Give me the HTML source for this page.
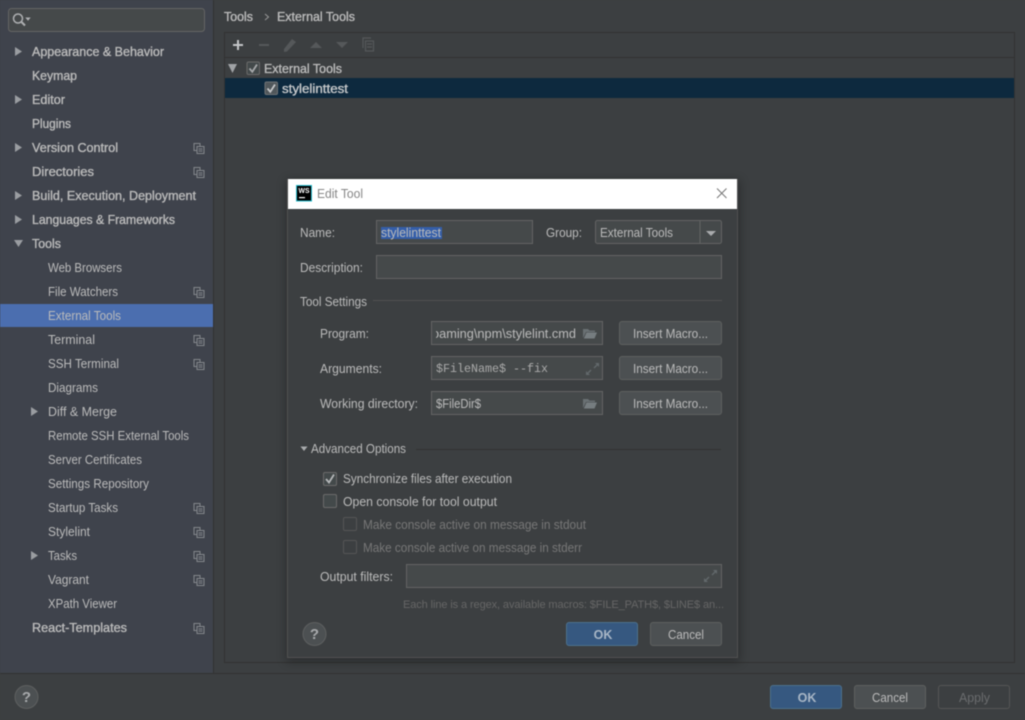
<!DOCTYPE html>
<html><head><meta charset="utf-8"><style>
html,body{margin:0;padding:0;background:#3c3f41;overflow:hidden}
svg{display:block;filter:blur(.4px)}
text{font-family:"Liberation Sans",sans-serif;font-size:12.5px;fill:#bbb}
.b{stroke:#bbb;stroke-width:.35px}
.d{fill:#777}
.m{font-family:"Liberation Mono",monospace}
</style></head><body>
<svg width="1025" height="720" viewBox="0 0 1025 720" xmlns="http://www.w3.org/2000/svg">
<defs>
<g id="cfg" fill="none" stroke="#84878c" stroke-width="1"><path d="M6.500 3V.5H.5V7.500H3"/><rect x="3.500" y="3.500" width="7" height="7" fill="#3f434c"/><path d="M5 6h4M5 8h4"/></g>
<path id="tr" d="M0 0L7 4.500L0 9Z" fill="#9a9da1"/>
<g id="folder"><path d="M0 2H5L6.500 3.500H12V5H3L0 11Z" fill="#697073"/><path d="M3.500 5.500H14L11.500 11.500H.8Z" fill="#767d80"/></g>
<g id="exp" stroke="#62686b" fill="#62686b" stroke-width="1.300"><path d="M8 6L12 2" fill="none"/><path d="M9 1H13V5Z" stroke="none"/><path d="M5 8L1 12" fill="none"/><path d="M0 9V13H4Z" stroke="none"/></g>
<clipPath id="pc"><rect x="436" y="322" width="142" height="22"/></clipPath>
<filter id="sh" x="-10%" y="-10%" width="120%" height="120%"><feGaussianBlur stdDeviation="5"/></filter>
</defs>

<rect width="1025" height="720" fill="#3c3f41"/>
<!-- sidebar -->
<rect width="213" height="673" fill="#3f434c"/>
<rect x="213" width="1" height="673" fill="#323232"/>
<rect y="673" width="1025" height="1" fill="#323232"/>
<rect x="8.500" y="8.500" width="196" height="23" rx="3" fill="#45494a" stroke="#646464"/>
<circle cx="18" cy="18.500" r="4.500" fill="none" stroke="#aeb0b2" stroke-width="1.500"/>
<path d="M21.500 22L25 25.500" stroke="#aeb0b2" stroke-width="2"/>
<path d="M25.300 17.500H30.700L28 20.800Z" fill="#aeb0b2"/>

<rect y="304" width="213" height="23" fill="#4b6eaf"/>

<use href="#tr" x="15" y="47"/><use href="#tr" x="15" y="95"/><use href="#tr" x="15" y="143"/><use href="#tr" x="15" y="191"/><use href="#tr" x="15" y="215"/>
<path d="M14 240H23L18.500 247Z" fill="#9a9da1"/>
<use href="#tr" x="31" y="407"/><use href="#tr" x="31" y="551"/>

<text class="b" x="32" y="56" textLength="132" lengthAdjust="spacingAndGlyphs">Appearance &amp; Behavior</text>
<text class="b" x="32" y="80" textLength="45" lengthAdjust="spacingAndGlyphs">Keymap</text>
<text class="b" x="32" y="104" textLength="33" lengthAdjust="spacingAndGlyphs">Editor</text>
<text class="b" x="32" y="128" textLength="39" lengthAdjust="spacingAndGlyphs">Plugins</text>
<text class="b" x="32" y="152" textLength="86" lengthAdjust="spacingAndGlyphs">Version Control</text>
<text class="b" x="32" y="176" textLength="62" lengthAdjust="spacingAndGlyphs">Directories</text>
<text class="b" x="32" y="200" textLength="164" lengthAdjust="spacingAndGlyphs">Build, Execution, Deployment</text>
<text class="b" x="32" y="224" textLength="143" lengthAdjust="spacingAndGlyphs">Languages &amp; Frameworks</text>
<text class="b" x="32" y="248" textLength="29" lengthAdjust="spacingAndGlyphs">Tools</text>
<text x="48" y="272" textLength="74" lengthAdjust="spacingAndGlyphs">Web Browsers</text>
<text x="48" y="296" textLength="70" lengthAdjust="spacingAndGlyphs">File Watchers</text>
<text x="48" y="320" textLength="73" lengthAdjust="spacingAndGlyphs">External Tools</text>
<text x="48" y="344" textLength="47" lengthAdjust="spacingAndGlyphs">Terminal</text>
<text x="48" y="368" textLength="71" lengthAdjust="spacingAndGlyphs">SSH Terminal</text>
<text x="48" y="392" textLength="50" lengthAdjust="spacingAndGlyphs">Diagrams</text>
<text x="48" y="416" textLength="69" lengthAdjust="spacingAndGlyphs">Diff &amp; Merge</text>
<text x="48" y="440" textLength="141" lengthAdjust="spacingAndGlyphs">Remote SSH External Tools</text>
<text x="48" y="464" textLength="94" lengthAdjust="spacingAndGlyphs">Server Certificates</text>
<text x="48" y="488" textLength="101" lengthAdjust="spacingAndGlyphs">Settings Repository</text>
<text x="48" y="512" textLength="70" lengthAdjust="spacingAndGlyphs">Startup Tasks</text>
<text x="48" y="536" textLength="42" lengthAdjust="spacingAndGlyphs">Stylelint</text>
<text x="48" y="560" textLength="29" lengthAdjust="spacingAndGlyphs">Tasks</text>
<text x="48" y="584" textLength="41" lengthAdjust="spacingAndGlyphs">Vagrant</text>
<text x="48" y="608" textLength="69" lengthAdjust="spacingAndGlyphs">XPath Viewer</text>
<text class="b" x="32" y="632" textLength="95" lengthAdjust="spacingAndGlyphs">React-Templates</text>

<use href="#cfg" x="193.500" y="143"/><use href="#cfg" x="193.500" y="167"/><use href="#cfg" x="193.500" y="287"/><use href="#cfg" x="193.500" y="335"/><use href="#cfg" x="193.500" y="359"/><use href="#cfg" x="193.500" y="503"/><use href="#cfg" x="193.500" y="527"/><use href="#cfg" x="193.500" y="551"/><use href="#cfg" x="193.500" y="575"/><use href="#cfg" x="193.500" y="623"/>

<!-- right panel -->
<text class="b" x="224" y="21" textLength="29" lengthAdjust="spacingAndGlyphs">Tools</text>
<path d="M265 14L268.500 17L265 20" fill="none" stroke="#999" stroke-width="1"/>
<text class="b" x="277" y="21" textLength="78" lengthAdjust="spacingAndGlyphs">External Tools</text>
<rect x="224.500" y="32.500" width="790" height="630" fill="#3c3f41" stroke="#323232"/>
<rect x="225" y="57" width="789" height="1" fill="#323232"/>
<path d="M233 45H243M238 40V50" stroke="#c4c6c8" stroke-width="2"/>
<path d="M259 45H269" stroke="#55585a" stroke-width="2"/>
<path d="M284 49L292 39L296 42L287 51.500L284 52Z" fill="#55585a"/>
<path d="M310 48L316 42L322 48Z" fill="#55585a"/>
<path d="M336 42H348L342 48Z" fill="#55585a"/>
<g fill="none" stroke="#55585a" stroke-width="1.200"><path d="M371 38H363V48"/><rect x="365.500" y="41" width="8" height="10"/><path d="M367 44h5M367 47h5"/></g>

<path d="M228 64H237L232.500 73Z" fill="#a0a3a6"/>
<rect x="247" y="62" width="12.500" height="12.500" rx="1.500" fill="#43494a" stroke="#6b6b6b"/>
<path d="M249.500 68.500L252.300 71.800L257 64.500" fill="none" stroke="#a7a9ab" stroke-width="1.800"/>
<text class="b" x="264" y="73" textLength="78" lengthAdjust="spacingAndGlyphs">External Tools</text>
<rect x="225" y="78" width="789" height="20" fill="#0d293e"/>
<rect x="265" y="82" width="12.500" height="12.500" rx="1.500" fill="#50575b" stroke="#6f7376"/>
<path d="M267.500 88.500L270.300 91.800L275 84.500" fill="none" stroke="#c5c7c9" stroke-width="1.800"/>
<text class="b" x="282" y="93" textLength="66" lengthAdjust="spacingAndGlyphs" style="fill:#c8cacc;stroke:#c8cacc">stylelinttest</text>

<!-- bottom -->
<circle cx="26.500" cy="697" r="11.500" fill="#4c5052" stroke="#5e6060"/>
<text x="26.500" y="702" text-anchor="middle" style="font-size:15px;font-weight:bold;fill:#a9abad">?</text>
<rect x="770.500" y="685.500" width="71" height="23" rx="2.500" fill="#365880" stroke="#4c708c"/>
<text x="807" y="702" text-anchor="middle" style="font-weight:bold;fill:#a9b7c6">OK</text>
<rect x="854.500" y="685.500" width="71" height="23" rx="2.500" fill="#4c5052" stroke="#5e6060"/>
<text x="872" y="702" textLength="36" lengthAdjust="spacingAndGlyphs">Cancel</text>
<rect x="938.500" y="685.500" width="71" height="23" rx="2.500" fill="#3c3f41" stroke="#555"/>
<text x="959" y="702" textLength="31" lengthAdjust="spacingAndGlyphs" style="fill:#6a6c6e">Apply</text>

<!-- dialog -->
<rect x="286" y="180" width="454" height="482" fill="#000" opacity=".28" filter="url(#sh)"/>
<rect x="287.500" y="179.500" width="450" height="478" fill="#3c3f41" stroke="#515151"/>
<rect x="288" y="179" width="449" height="30" fill="#fff"/>
<rect x="296.500" y="185.500" width="15" height="15.500" fill="#000" stroke="#22b8c8" stroke-width="1"/>
<text x="298.500" y="193" textLength="11" lengthAdjust="spacingAndGlyphs" style="font-size:7.500px;font-weight:bold;fill:#fff">WS</text>
<rect x="299" y="197" width="6" height="1.200" fill="#fff"/>
<text x="317" y="198" textLength="46" lengthAdjust="spacingAndGlyphs" style="fill:#868686">Edit Tool</text>
<path d="M717 188.500L726.500 198M726.500 188.500L717 198" stroke="#777" stroke-width="1"/>

<text x="300" y="237" textLength="35" lengthAdjust="spacingAndGlyphs">Name:</text>
<rect x="376.500" y="220.500" width="156" height="23" fill="#45494a" stroke="#646464"/>
<rect x="381" y="227" width="61" height="12" fill="#2f65ca" opacity=".75"/>
<text x="381" y="237" textLength="60" lengthAdjust="spacingAndGlyphs">stylelinttest</text>
<text x="546" y="237" textLength="36" lengthAdjust="spacingAndGlyphs">Group:</text>
<rect x="595.500" y="220.500" width="126" height="23" rx="2" fill="#45494a" stroke="#646464"/>
<rect x="699.500" y="221" width="1" height="22" fill="#646464"/>
<text x="600" y="237" textLength="73" lengthAdjust="spacingAndGlyphs">External Tools</text>
<path d="M706 231H716L711 236Z" fill="#a9abad"/>

<text x="300" y="272" textLength="63" lengthAdjust="spacingAndGlyphs">Description:</text>
<rect x="376.500" y="255.500" width="345" height="23" fill="#45494a" stroke="#646464"/>

<text x="300" y="306" textLength="67" lengthAdjust="spacingAndGlyphs">Tool Settings</text>
<rect x="373" y="300" width="349" height="1" fill="#515151"/>

<text x="320" y="338" textLength="49" lengthAdjust="spacingAndGlyphs">Program:</text>
<rect x="431.500" y="321.500" width="171" height="23" fill="#45494a" stroke="#646464"/>
<g clip-path="url(#pc)"><text x="432" y="338" textLength="144" lengthAdjust="spacingAndGlyphs">oaming\npm\stylelint.cmd</text></g>
<use href="#folder" x="583" y="327"/>
<rect x="619.500" y="321.500" width="102" height="23" rx="2.500" fill="#4c5052" stroke="#5e6060"/>
<text x="633" y="338" textLength="75" lengthAdjust="spacingAndGlyphs">Insert Macro...</text>

<text x="320" y="373" textLength="62" lengthAdjust="spacingAndGlyphs">Arguments:</text>
<rect x="431.500" y="356.500" width="171" height="23" fill="#45494a" stroke="#646464"/>
<text class="m" x="436" y="372" textLength="112" style="font-size:11.700px;fill:#aaa">$FileName$ --fix</text>
<use href="#exp" x="586" y="362"/>
<rect x="619.500" y="356.500" width="102" height="23" rx="2.500" fill="#4c5052" stroke="#5e6060"/>
<text x="633" y="373" textLength="75" lengthAdjust="spacingAndGlyphs">Insert Macro...</text>

<text x="320" y="408" textLength="98" lengthAdjust="spacingAndGlyphs">Working directory:</text>
<rect x="431.500" y="391.500" width="171" height="23" fill="#45494a" stroke="#646464"/>
<text x="436" y="408" textLength="45" lengthAdjust="spacingAndGlyphs">$FileDir$</text>
<use href="#folder" x="583" y="397"/>
<rect x="619.500" y="391.500" width="102" height="23" rx="2.500" fill="#4c5052" stroke="#5e6060"/>
<text x="633" y="408" textLength="75" lengthAdjust="spacingAndGlyphs">Insert Macro...</text>

<path d="M300.500 446.500H307.500L304 451Z" fill="#a9abad"/>
<text x="311" y="453" textLength="95" lengthAdjust="spacingAndGlyphs">Advanced Options</text>
<rect x="416" y="449" width="305" height="1" fill="#323232"/>

<rect x="323.500" y="472.500" width="13" height="13" rx="1.500" fill="#43494a" stroke="#6b6b6b"/>
<path d="M326 479L329 482.500L334 474.500" fill="none" stroke="#b5b7b9" stroke-width="1.800"/>
<text x="343" y="483" textLength="169" lengthAdjust="spacingAndGlyphs">Synchronize files after execution</text>
<rect x="323.500" y="494.500" width="13" height="13" rx="1.500" fill="#43494a" stroke="#6b6b6b"/>
<text x="343" y="506" textLength="154" lengthAdjust="spacingAndGlyphs">Open console for tool output</text>
<rect x="343.500" y="517.500" width="13" height="13" rx="1.500" fill="#3c3f41" stroke="#555"/>
<text class="d" x="363" y="529" textLength="223" lengthAdjust="spacingAndGlyphs">Make console active on message in stdout</text>
<rect x="343.500" y="540.500" width="13" height="13" rx="1.500" fill="#3c3f41" stroke="#555"/>
<text class="d" x="363" y="552" textLength="219" lengthAdjust="spacingAndGlyphs">Make console active on message in stderr</text>

<text x="320" y="581" textLength="73" lengthAdjust="spacingAndGlyphs">Output filters:</text>
<rect x="406.500" y="564.500" width="315" height="23" fill="#45494a" stroke="#646464"/>
<use href="#exp" x="704" y="569"/>
<text x="403" y="608" textLength="321" lengthAdjust="spacing" style="font-size:11px;fill:#666">Each line is a regex, available macros: $FILE_PATH$, $LINE$ an...</text>

<circle cx="314.500" cy="634" r="11.500" fill="#4c5052" stroke="#5e6060"/>
<text x="314.500" y="639" text-anchor="middle" style="font-size:15px;font-weight:bold;fill:#a9abad">?</text>
<rect x="566.500" y="622.500" width="71" height="23" rx="2.500" fill="#365880" stroke="#4c708c"/>
<text x="603" y="639" text-anchor="middle" style="font-weight:bold;fill:#a9b7c6">OK</text>
<rect x="650.500" y="622.500" width="71" height="23" rx="2.500" fill="#4c5052" stroke="#5e6060"/>
<text x="668" y="639" textLength="36" lengthAdjust="spacingAndGlyphs">Cancel</text>
</svg>
</body></html>
